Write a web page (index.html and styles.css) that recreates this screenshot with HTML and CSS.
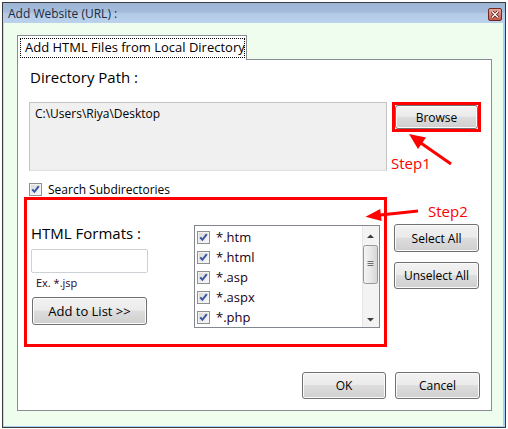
FILE: index.html
```html
<!DOCTYPE html>
<html lang="en">
<head>
    <meta charset="UTF-8">
    <title>Add Website (URL)</title>
    <link rel="stylesheet" href="styles.css">
</head>
<body>

    <!-- shared checkbox glyph -->
    <svg class="defs" width="0" height="0">
        <defs>
            <linearGradient id="cbFill" x1="0" y1="0" x2="1" y2="1">
                <stop offset="0" stop-color="#d9d9d9"/>
                <stop offset="1" stop-color="#f7f7f7"/>
            </linearGradient>
            <symbol id="cb" viewBox="0 0 13 13">
                <rect x="0.5" y="0.5" width="12" height="12" fill="#f4f4f4" stroke="#8e8f8f"/>
                <rect x="2" y="2" width="9" height="9" fill="url(#cbFill)"/>
                <path d="M3.2 6.4 L5.4 8.8 L9.8 3.2" fill="none" stroke="#3b56a2" stroke-width="2"/>
            </symbol>
        </defs>
    </svg>

    <!-- Dialog window -->
    <div class="window">
        <div class="titlebar">
            <span class="title">Add Website (URL) :</span>
            <span class="close">
                <svg width="14" height="13" viewBox="0 0 14 13">
                    <path d="M4 3.5 L10 9.5 M10 3.5 L4 9.5" stroke="#5a1a14" stroke-width="3"/>
                    <path d="M4 3.5 L10 9.5 M10 3.5 L4 9.5" stroke="#fff" stroke-width="1.4"/>
                </svg>
            </span>
        </div>

        <div class="client">
            <div class="tab"><span class="tab-label">Add HTML Files from Local Directory</span></div>

            <div class="page">
                <h2 class="heading">Directory Path :</h2>

                <div class="path-row">
                    <div class="path-box">C:\Users\Riya\Desktop</div>
                    <div class="mark">
                        <button class="btn browse">Browse</button>
                    </div>
                </div>

                <div class="check-row">
                    <svg class="cb"><use href="#cb"/></svg>
                    <span>Search Subdirectories</span>
                </div>

                <div class="format-row">
                    <div class="step-box">
                        <div class="format-left">
                            <h2 class="heading">HTML Formats :</h2>
                            <div class="field"></div>
                            <div class="hint">Ex. *.jsp</div>
                            <button class="btn add">Add to List &gt;&gt;</button>
                        </div>

                        <div class="list">
                            <ul class="items">
                                <li><svg class="cb"><use href="#cb"/></svg>*.htm</li>
                                <li><svg class="cb"><use href="#cb"/></svg>*.html</li>
                                <li><svg class="cb"><use href="#cb"/></svg>*.asp</li>
                                <li><svg class="cb"><use href="#cb"/></svg>*.aspx</li>
                                <li><svg class="cb"><use href="#cb"/></svg>*.php</li>
                            </ul>
                            <svg class="scrollbar" width="17" height="101" viewBox="0 0 17 101">
                                <defs>
                                    <linearGradient id="thumb" x1="0" y1="0" x2="1" y2="0">
                                        <stop offset="0" stop-color="#f4f4f4"/>
                                        <stop offset="0.5" stop-color="#e8e8e8"/>
                                        <stop offset="1" stop-color="#d4d4d4"/>
                                    </linearGradient>
                                </defs>
                                <rect x="0" y="0" width="17" height="101" fill="#f3f3f3"/>
                                <line x1="0.5" y1="0" x2="0.5" y2="101" stroke="#e6e6e6"/>
                                <polygon points="5,12 8.5,8.5 12,12" fill="#3c3c3c"/>
                                <rect x="1.5" y="19.5" width="14" height="38" rx="2" fill="url(#thumb)" stroke="#989898"/>
                                <path d="M5.5 35.5 H11.5 M5.5 37.5 H11.5 M5.5 39.5 H11.5" stroke="#707070"/>
                                <polygon points="5,92 12,92 8.5,95.5" fill="#3c3c3c"/>
                            </svg>
                        </div>
                    </div>

                    <div class="side-buttons">
                        <button class="btn select">Select All</button>
                        <button class="btn unselect">Unselect All</button>
                    </div>
                </div>

                <div class="footer">
                    <button class="btn ok">OK</button>
                    <button class="btn cancel">Cancel</button>
                </div>
            </div>
        </div>
    </div>

    <!-- Red tutorial notes drawn over the dialog -->
    <svg class="notes" width="508" height="429" viewBox="0 0 508 429">
        <line x1="451" y1="164" x2="418" y2="141" stroke="#ff0000" stroke-width="3"/>
        <polygon points="409,134 426,137.6 418,149" fill="#ff0000"/>
        <text x="391" y="168.5" class="step">Step1</text>

        <line x1="418" y1="211" x2="378" y2="215.3" stroke="#ff0000" stroke-width="3"/>
        <polygon points="365.5,216.7 380.2,209.1 381.6,221.1" fill="#ff0000"/>
        <text x="428" y="216.5" class="step">Step2</text>
    </svg>

</body>
</html>
```

FILE: styles.css
```css
* {
    box-sizing: border-box;
}

body {
    margin: 0;
    padding: 2px;
    background-color: #fff;
    font-family: 'Open Sans', 'Noto Sans', sans-serif;
    color: #000;
    position: relative;
    width: 508px;
    height: 429px;
    overflow: hidden;
}

.defs {
    position: absolute;
}

.window {
    width: 504px;
    height: 426px;
    border: 1px solid #3a3a3a;
    display: flex;
    flex-direction: column;
    background-color: #effdef;
}

.titlebar {
    height: 20px;
    display: flex;
    align-items: center;
    justify-content: space-between;
    padding: 0 3px 0 5px;
    background: linear-gradient(#9eb6d6 0%, #a4bcda 45%, #b2cae6 52%, #bad2ec 100%);
}

.title {
    font-size: 12px;
    color: #1d2a40;
}

.close {
    width: 14px;
    height: 13px;
    margin-top: 2px;
    border: 1px solid #6e2a22;
    border-radius: 2px;
    background: linear-gradient(#e8a898, #c4584a);
    display: flex;
    align-items: center;
    justify-content: center;
}

.close svg {
    display: block;
    margin: -1px;
}

.client {
    flex: 1;
    padding: 12px 0 0 13px;
    border-left: 1px solid #bcdcf4;
    border-right: 2px solid #a8d0f0;
    border-bottom: 1px solid #a8d0f0;
}

/* tab header */
.tab {
    position: relative;
    z-index: 1;
    width: 230px;
    height: 25px;
    margin-bottom: -1px;
    padding: 2px 0 0 2px;
    background-color: #fff;
    border: 1px solid #898c95;
    border-bottom: none;
}

.tab-label {
    display: block;
    width: 225px;
    height: 20px;
    padding-left: 4px;
    border: 1px dotted #000;
    font-size: 13px;
    line-height: 17px;
    white-space: nowrap;
}

/* tab page */
.page {
    width: 475px;
    height: 352px;
    background-color: #fff;
    border: 1px solid #898c95;
}

.heading {
    margin: 7px 0 0 12px;
    font-size: 15px;
    font-weight: normal;
    line-height: 20px;
}

.path-row {
    display: flex;
    margin-top: 15px;
}

.path-box {
    width: 358px;
    height: 69px;
    margin-left: 11px;
    padding: 3px 0 0 5px;
    background-color: #f0f0f0;
    border: 1px solid #c4c4c4;
    border-bottom-color: #dedede;
    font-size: 12px;
    line-height: 16px;
}

.mark {
    width: 89px;
    height: 30px;
    margin-left: 5px;
    border: 3px solid #ff0000;
}

.btn {
    display: block;
    padding: 0;
    font-family: 'Open Sans', 'Noto Sans', sans-serif;
    font-size: 12px;
    color: #000;
    border: 1px solid #707070;
    border-radius: 3px;
    background: linear-gradient(#f2f2f2 0%, #ebebeb 47%, #dddddd 50%, #cfcfcf 100%);
    box-shadow: inset 0 0 0 1px #fbfbfb;
}

.browse {
    width: 83px;
    height: 24px;
}

.check-row {
    display: flex;
    align-items: center;
    gap: 6px;
    height: 16px;
    margin: 10px 0 0 11px;
    font-size: 12px;
}

.cb {
    width: 13px;
    height: 13px;
    flex: none;
}

.format-row {
    display: flex;
}

.step-box {
    display: flex;
    width: 363px;
    height: 150px;
    margin-left: 6px;
    border: 3px solid #ff0000;
}

.format-left {
    width: 121px;
    padding-left: 4px;
}

.format-left .heading {
    margin: 23px 0 0 0;
}

.field {
    width: 117px;
    height: 24px;
    margin-top: 6px;
    background-color: #fff;
    border: 1px solid #cdd0d5;
    border-radius: 2px;
}

.hint {
    margin: 3px 0 0 5px;
    font-size: 11px;
    line-height: 14px;
    color: #300020;
}

.add {
    width: 115px;
    height: 28px;
    margin: 7px 0 0 1px;
    font-size: 13px;
}

/* list of formats */
.list {
    display: flex;
    width: 186px;
    height: 103px;
    margin: 25px 0 0 46px;
    border: 1px solid #828790;
    overflow: hidden;
}

.items {
    flex: 1;
    margin: 0;
    padding: 1px 0 0 2px;
    list-style: none;
}

.items li {
    display: flex;
    align-items: center;
    gap: 6px;
    height: 20px;
    font-size: 13px;
    color: #1a0020;
}

.scrollbar {
    display: block;
    flex: none;
}

.side-buttons {
    display: flex;
    flex-direction: column;
    gap: 10px;
    margin: 27px 0 0 7px;
}

.select {
    width: 85px;
    height: 28px;
}

.unselect {
    width: 85px;
    height: 27px;
}

.footer {
    display: flex;
    justify-content: flex-end;
    gap: 9px;
    margin: 25px 11px 0 0;
}

.ok {
    width: 84px;
    height: 27px;
}

.cancel {
    width: 85px;
    height: 27px;
}

/* annotations */
.notes {
    position: absolute;
    top: 0;
    left: 0;
    pointer-events: none;
}

.step {
    font-family: 'Open Sans', 'Noto Sans', sans-serif;
    font-size: 15px;
    fill: #ff0000;
}
```
